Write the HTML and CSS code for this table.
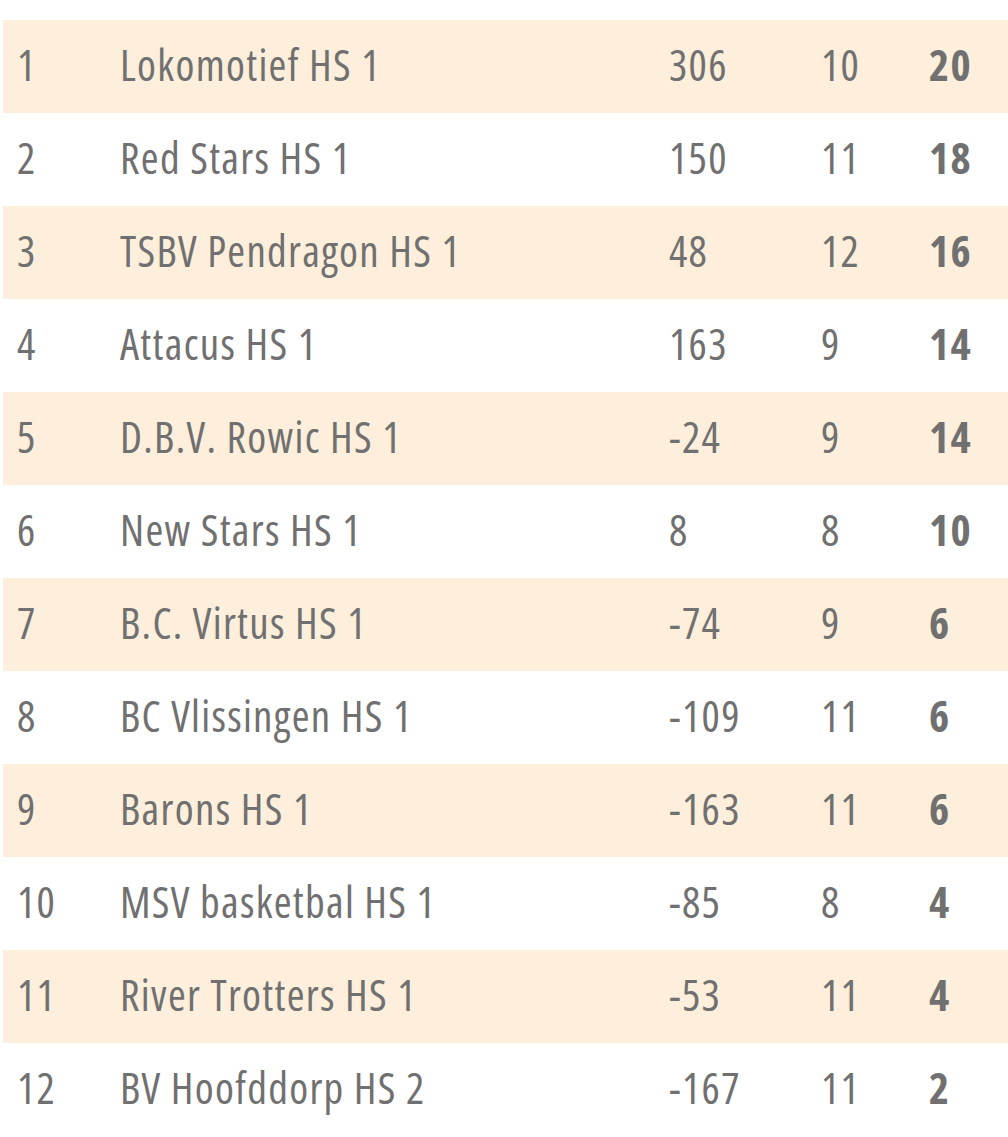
FILE: index.html
```html
<!DOCTYPE html>
<html>
<head>
<meta charset="utf-8">
<link rel="stylesheet" href="styles.css">
</head>
<body>
<div class="standings">
  <div class="row odd"><span>1</span><span>Lokomotief HS 1</span><span>306</span><span>10</span><span class="pts">20</span></div>
  <div class="row"><span>2</span><span>Red Stars HS 1</span><span>150</span><span>11</span><span class="pts">18</span></div>
  <div class="row odd"><span>3</span><span>TSBV Pendragon HS 1</span><span>48</span><span>12</span><span class="pts">16</span></div>
  <div class="row"><span>4</span><span>Attacus HS 1</span><span>163</span><span>9</span><span class="pts">14</span></div>
  <div class="row odd"><span>5</span><span>D.B.V. Rowic HS 1</span><span>-24</span><span>9</span><span class="pts">14</span></div>
  <div class="row"><span>6</span><span>New Stars HS 1</span><span>8</span><span>8</span><span class="pts">10</span></div>
  <div class="row odd"><span>7</span><span>B.C. Virtus HS 1</span><span>-74</span><span>9</span><span class="pts">6</span></div>
  <div class="row"><span>8</span><span>BC Vlissingen HS 1</span><span>-109</span><span>11</span><span class="pts">6</span></div>
  <div class="row odd"><span>9</span><span>Barons HS 1</span><span>-163</span><span>11</span><span class="pts">6</span></div>
  <div class="row"><span>10</span><span>MSV basketbal HS 1</span><span>-85</span><span>8</span><span class="pts">4</span></div>
  <div class="row odd"><span>11</span><span>River Trotters HS 1</span><span>-53</span><span>11</span><span class="pts">4</span></div>
  <div class="row"><span>12</span><span>BV Hoofddorp HS 2</span><span>-167</span><span>11</span><span class="pts">2</span></div>
</div>
</body>
</html>
```
FILE: styles.css
```css
html, body {
  margin: 0;
  padding: 0;
  background: #ffffff;
}
.standings {
  padding: 20px 0 0 3px;
  font-family: "Open Sans", "Roboto", "DejaVu Sans Condensed", sans-serif;
  font-stretch: 75%;
  font-size: 43px;
  letter-spacing: 1.3px;
  color: #707070;
}
.row {
  display: grid;
  grid-template-columns: 103px 549px 152px 108px 1fr;
  padding-left: 14px;
  height: 93px;
  line-height: 89px;
  white-space: nowrap;
}
.row.odd {
  background: #fdefdb;
}
.pts {
  font-weight: 700;
}
```
